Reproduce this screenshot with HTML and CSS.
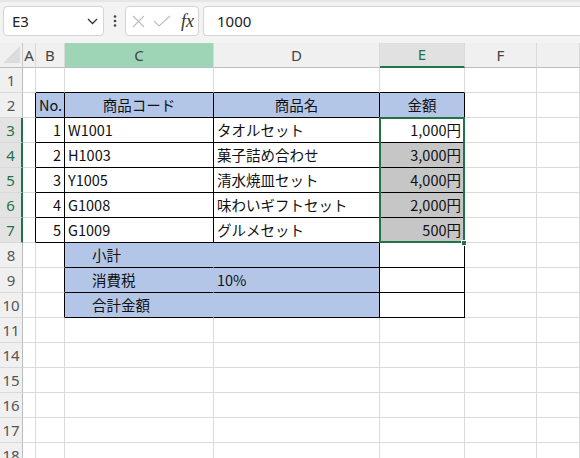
FILE: index.html
```html
<!DOCTYPE html>
<html lang="ja">
<head>
<meta charset="utf-8">
<title>Sheet</title>
<link rel="stylesheet" href="styles.css">
</head>
<body>
<div class="toolbar">
  <div class="namebox"><span>E3</span>
    <svg class="chev" width="11" height="7" viewBox="0 0 11 7"><polyline points="1,1 5.5,5.5 10,1" fill="none" stroke="#333" stroke-width="1.3"/></svg>
  </div>
  <div class="dots">
    <svg width="4" height="12" viewBox="0 0 4 12"><circle cx="2" cy="1.5" r="1.3" fill="#444"/><circle cx="2" cy="6" r="1.3" fill="#444"/><circle cx="2" cy="10.5" r="1.3" fill="#444"/></svg>
  </div>
  <div class="fxbox">
    <svg width="13" height="13" viewBox="0 0 13 13" class="ic-x"><path d="M1,1 L12,12 M12,1 L1,12" stroke="#bdbdbd" stroke-width="1.1" fill="none"/></svg>
    <svg width="18" height="12" viewBox="0 0 18 12" class="ic-ok"><polyline points="1,6 6,11 17,1" stroke="#bdbdbd" stroke-width="1.1" fill="none"/></svg>
    <span class="fx">fx</span>
  </div>
  <div class="formula">1000</div>
</div>
<div class="sheet">
  <div class="corner"><svg width="18" height="18" viewBox="0 0 18 18"><polygon points="17,0 17,17 0,17" fill="#dcdcdc"/></svg></div>
  <div class="ch">A</div><div class="ch">B</div><div class="ch selC">C</div><div class="ch">D</div><div class="ch selE">E</div><div class="ch">F</div><div class="ch"></div>

  <div class="rh">1</div><div class="c"></div><div class="c bb"></div><div class="c bb"></div><div class="c bb"></div><div class="c bb"></div><div class="c"></div><div class="c"></div>

  <div class="rh">2</div><div class="c br"></div><div class="c hd bb br ctr">No.</div><div class="c hd bb br ctr">商品コード</div><div class="c hd bb br ctr">商品名</div><div class="c hd bb br ctr">金額</div><div class="c"></div><div class="c"></div>

  <div class="rh sel">3</div><div class="c br"></div><div class="c bb br num">1</div><div class="c bb br">W1001</div><div class="c bb br">タオルセット</div><div class="c bb br num active">1,000円<div class="selbox"><div class="handle"></div></div></div><div class="c"></div><div class="c"></div>

  <div class="rh sel">4</div><div class="c br"></div><div class="c bb br num">2</div><div class="c bb br">H1003</div><div class="c bb br">菓子詰め合わせ</div><div class="c bb br num gr">3,000円</div><div class="c"></div><div class="c"></div>

  <div class="rh sel">5</div><div class="c br"></div><div class="c bb br num">3</div><div class="c bb br">Y1005</div><div class="c bb br">清水焼皿セット</div><div class="c bb br num gr">4,000円</div><div class="c"></div><div class="c"></div>

  <div class="rh sel">6</div><div class="c br"></div><div class="c bb br num">4</div><div class="c bb br">G1008</div><div class="c bb br">味わいギフトセット</div><div class="c bb br num gr">2,000円</div><div class="c"></div><div class="c"></div>

  <div class="rh sel">7</div><div class="c br"></div><div class="c bb br num">5</div><div class="c bb br">G1009</div><div class="c bb br">グルメセット</div><div class="c bb br num gr">500円</div><div class="c"></div><div class="c"></div>

  <div class="rh">8</div><div class="c"></div><div class="c br"></div><div class="c bl bb ind">小計</div><div class="c bl bb br"></div><div class="c bb br"></div><div class="c"></div><div class="c"></div>

  <div class="rh">9</div><div class="c"></div><div class="c br"></div><div class="c bl bb ind">消費税</div><div class="c bl bb br">10%</div><div class="c bb br"></div><div class="c"></div><div class="c"></div>

  <div class="rh">10</div><div class="c"></div><div class="c br"></div><div class="c bl bb ind">合計金額</div><div class="c bl bb br"></div><div class="c bb br"></div><div class="c"></div><div class="c"></div>

  <div class="rh">11</div><div class="c"></div><div class="c"></div><div class="c"></div><div class="c"></div><div class="c"></div><div class="c"></div><div class="c"></div>
  <div class="rh">14</div><div class="c"></div><div class="c"></div><div class="c"></div><div class="c"></div><div class="c"></div><div class="c"></div><div class="c"></div>
  <div class="rh">15</div><div class="c"></div><div class="c"></div><div class="c"></div><div class="c"></div><div class="c"></div><div class="c"></div><div class="c"></div>
  <div class="rh">16</div><div class="c"></div><div class="c"></div><div class="c"></div><div class="c"></div><div class="c"></div><div class="c"></div><div class="c"></div>
  <div class="rh">17</div><div class="c"></div><div class="c"></div><div class="c"></div><div class="c"></div><div class="c"></div><div class="c"></div><div class="c"></div>
  <div class="rh">18</div><div class="c"></div><div class="c"></div><div class="c"></div><div class="c"></div><div class="c"></div><div class="c"></div><div class="c"></div>
</div>
</body>
</html>
```
FILE: styles.css
```css
* { box-sizing: border-box; margin: 0; padding: 0; }
html, body { background: #fff; }
body {
  width: 580px;
  height: 458px;
  overflow: hidden;
  font-family: "Noto Sans CJK JP", sans-serif;
}
.toolbar {
  height: 43px;
  background: #f3f3f3;
  border-top: 2px solid #e6e6e6;
  display: flex;
  align-items: flex-start;
  padding: 4px 0 0 3px;
}
.namebox {
  width: 101px;
  height: 30px;
  background: #fff;
  border: 1px solid #d4d4d4;
  border-radius: 4px;
  display: flex;
  align-items: center;
  justify-content: space-between;
  padding: 0 5px 0 8px;
  font-family: "Noto Sans", sans-serif;
  font-size: 15px;
  color: #222;
}
.dots {
  width: 21px;
  height: 30px;
  display: flex;
  align-items: center;
  justify-content: center;
}
.fxbox {
  width: 74px;
  height: 30px;
  background: #fff;
  border: 1px solid #d4d4d4;
  border-radius: 4px;
  display: flex;
  align-items: center;
  padding-left: 6px;
}
.ic-ok { margin-left: 8px; }
.fx {
  margin-left: 10px;
  font-family: "Liberation Serif", serif;
  font-style: italic;
  font-size: 18px;
  color: #333;
  line-height: 1;
}
.formula {
  flex: 1;
  height: 30px;
  margin-left: 4px;
  background: #fff;
  border: 1px solid #d4d4d4;
  border-right: none;
  border-radius: 4px 0 0 4px;
  padding-left: 13px;
  font-family: "Noto Sans", sans-serif;
  font-size: 15px;
  color: #222;
  display: flex;
  align-items: center;
}
.sheet {
  display: grid;
  grid-template-columns: 23px 13px 29px 149px 166px 85px 72px 1fr;
  grid-auto-rows: 25px;
}
.corner {
  background: #f0f0f0;
  border-right: 1px solid #c8c8c8;
  border-bottom: 1px solid #bdbdbd;
  display: flex;
  align-items: flex-end;
  padding: 0 0 3px 3px;
}
.ch {
  background: #f0f0f0;
  border-right: 1px solid #d9d9d9;
  border-bottom: 1px solid #bdbdbd;
  font-family: "Noto Sans", sans-serif;
  font-size: 15px;
  line-height: 24px;
  color: #444;
  text-align: center;
}
.ch.selC { background: #9fd5b7; }
.ch.selE {
  background: #e1e1e1;
  color: #217346;
  border-bottom: 2px solid #217346;
  line-height: 23px;
}
.rh {
  background: #f0f0f0;
  border-right: 1px solid #bdbdbd;
  border-bottom: 1px solid #d9d9d9;
  font-family: "Noto Sans", sans-serif;
  font-size: 15px;
  line-height: 24px;
  color: #555;
  text-align: center;
}
.rh.sel {
  background: #e3e3e3;
  color: #217346;
  border-right: 2px solid #217346;
}
.c {
  border-right: 1px solid #dadada;
  border-bottom: 1px solid #dadada;
  padding: 0 3px;
  font-size: 14.5px;
  line-height: 24px;
  white-space: nowrap;
  color: #111;
}
.br { border-right-color: #000; }
.bb { border-bottom-color: #000; }
.hd { background: #b4c6e7; }
.bl { background: #b4c6e7; border-right-color: #b4c6e7; }
.bl.br { border-right-color: #000; }
.gr { background: #c6c6c6; }
.ctr { text-align: center; }
.num { text-align: right; }
.ind { padding-left: 27px; }
.active { position: relative; }
.selbox {
  position: absolute;
  left: -1px;
  top: -1px;
  width: 86px;
  height: 126px;
  border: 2px solid #217346;
  z-index: 2;
}
.handle {
  position: absolute;
  right: -4px;
  bottom: -5px;
  width: 6px;
  height: 6px;
  background: #217346;
  border: 1px solid #fff;
}
```
